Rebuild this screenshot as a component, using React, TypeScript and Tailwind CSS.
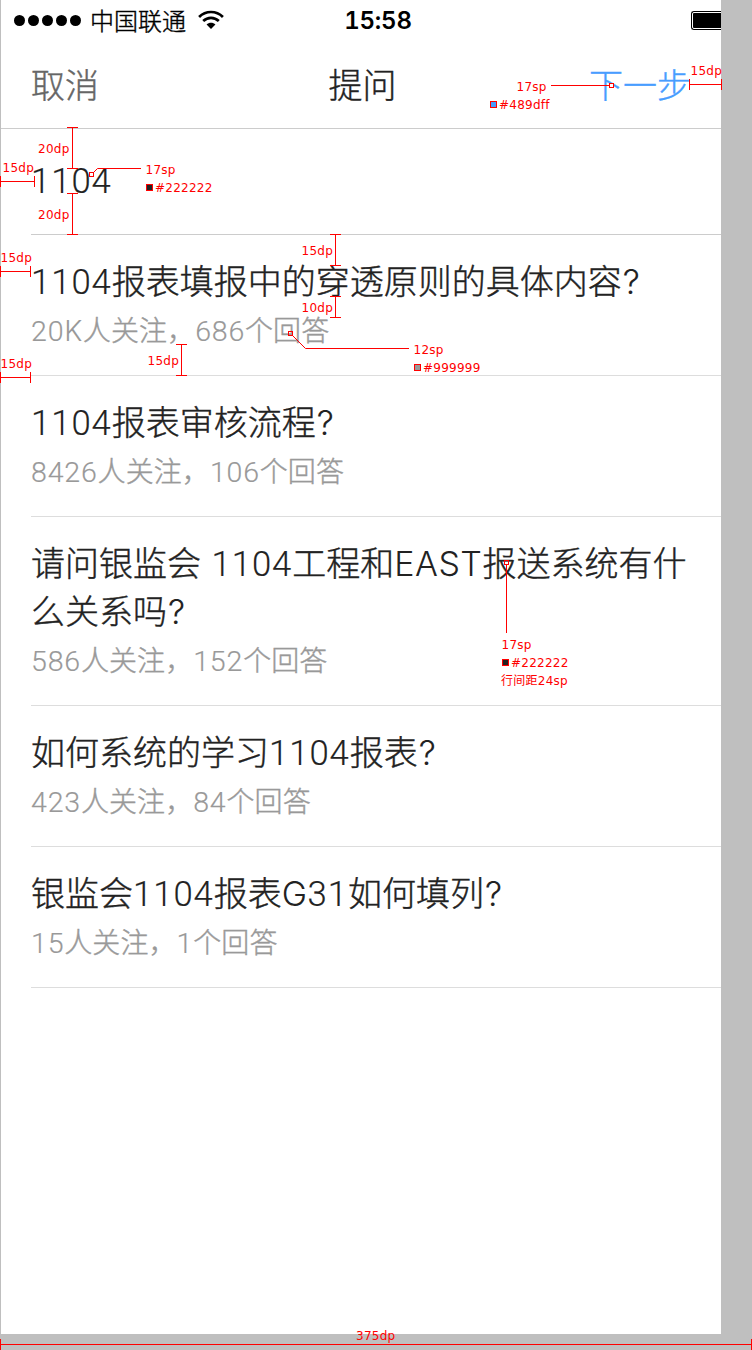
import React from "react";

const questions = [
  { title: ["1104报表填报中的穿透原则的具体内容?"], meta: "20K人关注，686个回答" },
  { title: ["1104报表审核流程?"], meta: "8426人关注，106个回答" },
  { title: ["请问银监会 1104工程和EAST报送系统有什", "么关系吗?"], meta: "586人关注，152个回答" },
  { title: ["如何系统的学习1104报表?"], meta: "423人关注，84个回答" },
  { title: ["银监会1104报表G31如何填列?"], meta: "15人关注，1个回答" },
];

const red = "#ff0000";

// Dimension lines: x1, y1, x2, y2
const dims: [number, number, number, number][] = [
  [72, 127, 72, 168],
  [72, 193, 72, 234],
  [0, 181, 34, 181],
  [0, 271, 30, 271],
  [0, 377, 30, 377],
  [335, 234, 335, 265],
  [335, 296, 335, 317],
  [181, 344, 181, 375],
  [689, 84, 721, 84],
  [0, 1344, 751, 1344],
];

function Dimension({ d }: { d: [number, number, number, number] }) {
  const [x1, y1, x2, y2] = d;
  const path =
    y1 === y2
      ? `M${x1} ${y1 + 0.5}H${x2 + 1}M${x1 + 0.5} ${y1 - 5}v11M${x2 + 0.5} ${y1 - 5}v11`
      : `M${x1 + 0.5} ${y1}V${y2 + 1}M${x1 - 5} ${y1 + 0.5}h11M${x1 - 5} ${y2 + 0.5}h11`;
  return <path d={path} />;
}

function Note({ at, children }: { at: string; children: React.ReactNode }) {
  return (
    <div className={`absolute whitespace-pre text-[12px] leading-[12px] tracking-[0.25px] text-[#ff0000] ${at}`}>{children}</div>
  );
}

function Swatch({ at, fill }: { at: string; fill: string }) {
  return <div className={`absolute size-[7px] border border-[#ff0000] ${at} ${fill}`} />;
}

function Annotations() {
  return (
    <div className="pointer-events-none absolute inset-0 font-['DejaVu_Sans','Noto_Sans_CJK_SC',sans-serif]">
      <svg width="752" height="1350" fill="none" stroke={red} className="absolute inset-0">
        {dims.map((d, i) => (
          <Dimension key={i} d={d} />
        ))}
        <path d="M551 85.5H609M93 173L97.500 168.500H141M292 335L305.500 348.500H409M506.500 565V633" />
        <rect x="609.5" y="83.500" width="4" height="4" fill="#fff" />
        <rect x="89.500" y="172.500" width="4" height="4" />
        <rect x="288.500" y="331.500" width="4" height="4" />
        <rect x="504.500" y="560.500" width="4" height="4" />
      </svg>
      <Note at="left-[516.500px] top-[81px]">17sp</Note>
      <Note at="left-[499px] top-[99px]">#489dff</Note>
      <Swatch at="left-[490px] top-[101px]" fill="bg-[#489dff]" />
      <Note at="left-[690.500px] top-[65px]">15dp</Note>
      <Note at="left-[38px] top-[143px]">20dp</Note>
      <Note at="left-[2.500px] top-[162px]">15dp</Note>
      <Note at="left-[38px] top-[209px]">20dp</Note>
      <Note at="left-[145.500px] top-[164px]">17sp</Note>
      <Note at="left-[155px] top-[182px]">#222222</Note>
      <Swatch at="left-[146px] top-[184px]" fill="bg-[#222222]" />
      <Note at="left-[0.500px] top-[252px]">15dp</Note>
      <Note at="left-[301.500px] top-[245px]">15dp</Note>
      <Note at="left-[301.500px] top-[302px]">10dp</Note>
      <Note at="left-[0.500px] top-[358px]">15dp</Note>
      <Note at="left-[147.500px] top-[355px]">15dp</Note>
      <Note at="left-[413.500px] top-[344px]">12sp</Note>
      <Note at="left-[423px] top-[362px]">#999999</Note>
      <Swatch at="left-[414px] top-[364px]" fill="bg-[#999999]" />
      <Note at="left-[501.500px] top-[639px]">17sp</Note>
      <Note at="left-[511px] top-[657px]">#222222</Note>
      <Swatch at="left-[502px] top-[659px]" fill="bg-[#222222]" />
      <Note at="left-[501px] top-[675px]">行间距24sp</Note>
      <Note at="left-[356px] top-[1330px]">375dp</Note>
    </div>
  );
}

function runStyle(part: string) {
  if (/[0-9]/.test(part)) return "font-['Roboto',sans-serif] text-[1.02em] tracking-[0.028em] [-webkit-text-stroke:0.15px_currentColor]";
  if (part === "?") return "ml-px font-['Inter',sans-serif] [-webkit-text-stroke:0.1px_currentColor]";
  return "font-['Inter',sans-serif] tracking-[0.014em] [-webkit-text-stroke:0px_currentColor]";
}

// Digits and Latin letters each use their own face beside the Chinese text.
function Mixed({ text }: { text: string }) {
  return (
    <>
      {text.split(/([0-9]+|[A-Za-z]+|\?)/).map((part, i) =>
        i % 2 ? (
          <span key={i} className={runStyle(part)}>
            {part}
          </span>
        ) : (
          part
        ),
      )}
    </>
  );
}

function StatusBar() {
  return (
    <header className="flex h-10 items-center justify-between text-black">
      <div className="flex w-[330px] items-center pl-[13px]">
        <div className="flex gap-[3px]">
          {[0, 1, 2, 3, 4].map((i) => (
            <span key={i} className="size-[11px] rounded-full bg-black" />
          ))}
        </div>
        <span className="ml-[9px] text-[24px] font-light leading-10 [-webkit-text-stroke:0.4px_currentColor]">中国联通</span>
        <svg width="26" height="20" viewBox="0 0 24 18" fill="none" stroke="#000" strokeWidth="2.5" className="ml-[12px]">
          <path d="M1 6.200C7.200 .1 16.800 .1 23 6.200M4.800 10C9 6 15 6 19.200 10" />
          <path d="M7.900 13.200C10.200 11 13.800 11 16.100 13.200L12 17.400Z" fill="#000" stroke="none" />
        </svg>
      </div>
      <span className="w-[94px] pt-[2px] text-center font-['Inter',sans-serif] text-[24px] font-semibold leading-10 tabular-nums tracking-[-0.2px]">15:58</span>
      <div className="flex w-[296px] justify-end">
        <div className="h-[19px] w-[30px] rounded-l-[3px] border border-r-0 border-black py-px pl-px">
          <div className="h-full rounded-l-[1px] bg-black" />
        </div>
      </div>
    </header>
  );
}

export default function App() {
  return (
    <div className="relative h-[1350px] w-[752px] overflow-hidden bg-[#bfbfbf] pl-px font-['Noto_Sans_CJK_SC',sans-serif]">
      <main className="h-[1334px] w-[720px] bg-white text-[#222222]">
        <StatusBar />
        <nav className="flex h-[89px] items-center justify-between border-b border-[#cccccc] pl-[30px] pr-[30px] text-[34px] font-light leading-[86px] [-webkit-text-stroke:0.4px_currentColor]">
          <span className="w-[104px] text-[#666666]">取消</span>
          <span className="pl-[3px]">提问</span>
          <span className="w-[104px] text-right text-[#489dff]">下一步</span>
        </nav>
        <div className="ml-[30px] flex h-[106px] items-center border-b border-[#cccccc] text-[34px] font-light">
          <Mixed text="1104" />
        </div>
        <ul className="ml-[30px]">
          {questions.map((q) => (
            <li key={q.meta} className="border-b border-[#dddddd] pb-[21px] pt-[21px] [-webkit-text-stroke:0.4px_currentColor]">
              {q.title.map((line) => (
                <h2 key={line} className="h-12 whitespace-pre text-[34px] font-light leading-[48px] [word-spacing:3px]">
                  <Mixed text={line} />
                </h2>
              ))}
              <p className="h-[50px] whitespace-pre text-[28px] font-light leading-[50px] tracking-[0.08px] text-[#999999]">
                <Mixed text={q.meta} />
              </p>
            </li>
          ))}
        </ul>
      </main>
      <Annotations />
    </div>
  );
}
